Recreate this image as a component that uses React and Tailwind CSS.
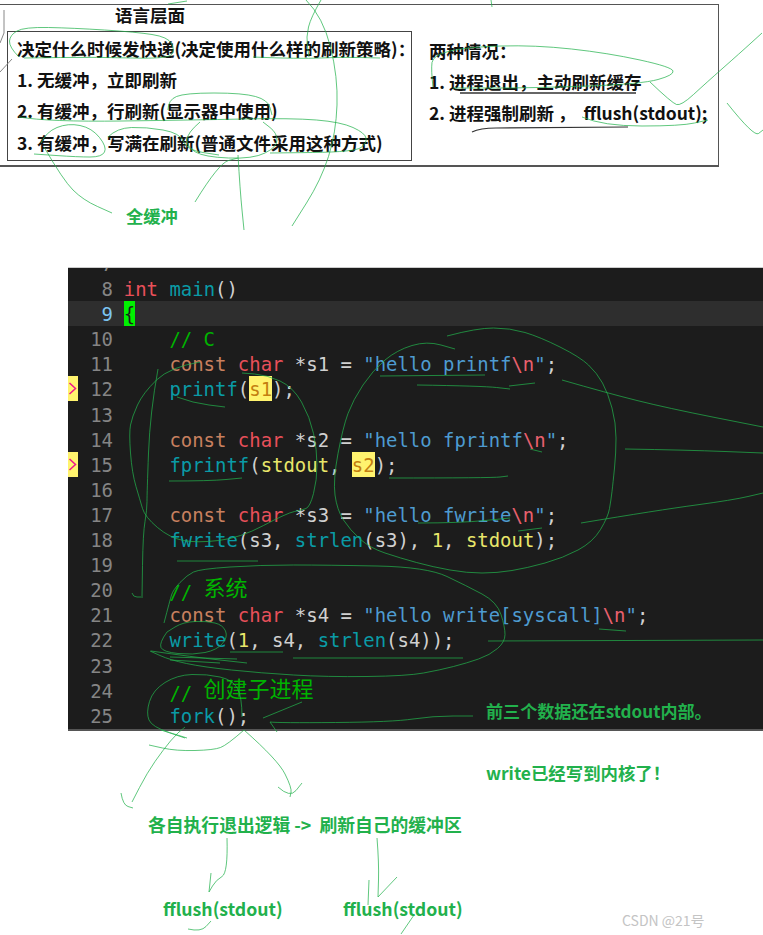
import React from 'react';

const cjk = "[font-family:'Noto_Sans_CJK_SC','Liberation_Sans',sans-serif]";

// token colours of the editor theme
const kw = 'text-[#e8505a]';
const st = 'text-[#c8805f]';
const fn = 'text-[#0a9ba6]';
const tx = 'text-[#d0d0d0]';
const cm = 'text-[#00b300]';
const str = 'text-[#4e9bd0]';
const esc = 'text-[#e8606e]';
const yl = 'text-[#e8e66a]';
const hl = 'bg-[#fff36e] text-[#c47f10] inline-block h-[25px]';

const lines = [
  { n: 7, t: [] },
  { n: 8, t: [['int', kw], [' ', tx], ['main', fn], ['()', tx]] },
  { n: 9, t: [['{', 'bg-[#00f000] text-[#1c1c1c] inline-block h-[25px]']], active: true },
  { n: 10, t: [['    // C', cm]] },
  { n: 11, t: [['    ', tx], ['const', st], [' ', tx], ['char', kw], [' *s1 = ', tx], ['"hello printf', str], ['\\n', esc], ['"', str], [';', tx]] },
  { n: 12, t: [['    ', tx], ['printf', fn], ['(', tx], ['s1', hl], [');', tx]], mark: true },
  { n: 13, t: [] },
  { n: 14, t: [['    ', tx], ['const', st], [' ', tx], ['char', kw], [' *s2 = ', tx], ['"hello fprintf', str], ['\\n', esc], ['"', str], [';', tx]] },
  { n: 15, t: [['    ', tx], ['fprintf', fn], ['(', tx], ['stdout', yl], [', ', tx], ['s2', hl], [');', tx]], mark: true },
  { n: 16, t: [] },
  { n: 17, t: [['    ', tx], ['const', st], [' ', tx], ['char', kw], [' *s3 = ', tx], ['"hello fwrite', str], ['\\n', esc], ['"', str], [';', tx]] },
  { n: 18, t: [['    ', tx], ['fwrite', fn], ['(s3, ', tx], ['strlen', fn], ['(s3), ', tx], ['1', yl], [', ', tx], ['stdout', yl], [');', tx]] },
  { n: 19, t: [] },
  { n: 20, t: [['    // ', cm]], zh: '系统' },
  { n: 21, t: [['    ', tx], ['const', st], [' ', tx], ['char', kw], [' *s4 = ', tx], ['"hello write[syscall]', str], ['\\n', esc], ['"', str], [';', tx]] },
  { n: 22, t: [['    ', tx], ['write', fn], ['(', tx], ['1', yl], [', s4, ', tx], ['strlen', fn], ['(s4));', tx]] },
  { n: 23, t: [] },
  { n: 24, t: [['    // ', cm]], zh: '创建子进程' },
  { n: 25, t: [['    ', tx], ['fork', fn], ['();', tx]] },
];

// freehand pen strokes, page coordinates
const pen = [
  '19,57 9,47 10,35 24,27 73,28 136,32 168,37 175,50 168,59 97,57 24,58',
  '253,57 300,59 340,57 380,58',
  '306,0 323,17 338,77 336,133 321,180 292,226',
  '321,0 311,17 306,37 309,57',
  '168,110 168,100 185,93 243,93 268,100 272,115',
  '19,117 49,122 195,120 292,118 341,122 365,133 367,143 355,152 270,153',
  '41,143 46,132 68,123 92,128 107,147 102,157 78,157 34,154',
  '108,137 117,128 146,127 180,133 187,150 219,155',
  '200,122 187,133 187,147 204,157 253,159 277,147 277,133 263,122',
  '44,147 63,180 83,200 112,213',
  '195,202 219,163 238,158',
  '238,155 240,190 244,230',
  '433,87 431,70 433,55 467,47 535,45 608,53 672,67 674,75 642,84 535,88 453,88',
  '582,117 603,126 681,126 708,120',
  '650,82 672,103 681,106 706,83 740,53 762,33',
  '727,103 754,137 763,130',
  '491,0 492,7',
  '168,4 187,1',
  // code panel
  '200,362 170,367 143,393 132,417 129,433 132,473 140,500 145,517 170,538 197,543 240,538 287,513 302,510 310,507 317,480 317,450 310,417 293,387 267,375 242,373',
  '158,369 150,413 147,493 147,510 143,533 142,598',
  '132,593 133,597 141,597',
  '177,397 193,403 225,407',
  '169,481 210,481 242,478',
  '177,561 258,561',
  '447,336 477,328 510,328 540,337 580,357 597,373 608,393 616,423 616,453 613,483 611,500 608,517 593,542 563,558 527,568 497,573 467,573 433,567 400,558 370,548 350,530 337,510 333,480 343,427 353,400 373,370 397,350 427,341 455,349',
  '380,376 485,375',
  '417,385 483,386 510,389',
  '509,386 535,383',
  '562,380 607,393 667,408 763,427',
  '625,449 687,450 763,453',
  '530,449 542,452',
  '389,478 492,478 508,476',
  '581,523 659,510 733,500 763,493',
  '418,523 460,523 510,518',
  '518,531 542,528',
  '164,623 170,600 173,590 187,575 200,569 260,565 327,565 427,567 467,586 497,602 505,627 505,642 490,655 467,663 440,670 407,676 327,677 260,673 203,667 170,660 150,651',
  '167,632 159,643 163,652 193,655 217,650 228,637 223,625 207,621 183,622 167,632',
  '151,651 193,657 247,663',
  '170,657 237,659',
  '170,660 220,663',
  '230,652 283,652',
  '293,658 463,658',
  '488,641 763,640',
  '599,629 626,631',
  '242,717 242,697 233,680 207,674 177,675 153,690 146,713 152,727 187,738',
  '263,718 302,702',
  '270,722 278,723 393,722 433,716 473,716',
  '270,722 277,732',
  // below panel
  '185,727 178,732 163,750 147,773 132,802',
  '121,793 123,805 133,808',
  '161,730 185,738',
  '244,730 227,745 214,750 176,751 149,745',
  '244,730 278,760 292,788 290,797',
  '278,787 290,798 302,783',
  '227,838 228,873 216,880 209,892',
  '211,873 209,892',
  '377,838 379,863 378,897',
  '369,880 368,905',
  '378,897 397,877',
  '188,929 201,932 211,921',
  '414,915 401,934',
];

function toPath(s) {
  const p = s.split(' ').map((q) => q.split(',').map(Number));
  let d = `M${p[0][0]} ${p[0][1]}`;
  for (let i = 1; i < p.length - 1; i++) {
    const mx = (p[i][0] + p[i + 1][0]) / 2;
    const my = (p[i][1] + p[i + 1][1]) / 2;
    d += ` Q${p[i][0]} ${p[i][1]} ${mx} ${my}`;
  }
  const last = p[p.length - 1];
  return `${d} L${last[0]} ${last[1]}`;
}

function CodeLine({ line }) {
  return (
    <div className={`flex h-[25.1px] leading-[27px] ${line.active ? 'bg-[#2e2e2e]' : ''}`}>
      <div className="w-[10px] shrink-0">
        {line.mark && (
          <div className="h-[25px] bg-[#fff36e]">
            <svg width="10" height="25" fill="none">
              <path d="M1.5 7 L7.5 12.5 L1.5 18" stroke="#f0128c" strokeWidth="1.5" />
            </svg>
          </div>
        )}
      </div>
      <div className={`w-[35px] shrink-0 text-right ${line.active ? 'text-[#7cc4f2]' : 'text-[#858585]'}`}>{line.n}</div>
      <div className="ml-[10.8px] whitespace-pre">
        {line.t.map((tok, i) => (
          <span key={i} className={tok[1]}>{tok[0]}</span>
        ))}
        {line.zh && <span className={`${cm} ${cjk} relative -top-[3px] text-[22px] leading-[25px]`}>{line.zh}</span>}
      </div>
    </div>
  );
}

export default function App() {
  return (
    <div className={`relative w-[763px] h-[935px] overflow-hidden bg-white pt-[4px] ${cjk}`}>
      {/* top slide */}
      <div className="w-[719px] h-[163px] border border-l-0 border-b-2 border-[#555] text-[#111] font-bold text-[17.5px]">
        <div className="h-[26px] pl-[115px] leading-[19px]">语言层面</div>
        <div className="flex">
          <div className="ml-[7px] w-[405px] h-[130px] border border-[#444] px-[9px] pt-[1px] leading-[31.2px] whitespace-pre">
            <div>决定什么时候发快递(决定使用什么样的刷新策略)：</div>
            <div>1. 无缓冲，立即刷新</div>
            <div>2. 有缓冲，行刷新(显示器中使用)</div>
            <div>3. 有缓冲，写满在刷新(普通文件采用这种方式)</div>
          </div>
          <div className="ml-[17px] pt-[4px] leading-[31px] whitespace-pre">
            <div>两种情况：</div>
            <div>1. 进程退出，主动刷新缓存</div>
            <div>2. 进程强制刷新 ，  fflush(stdout);</div>
          </div>
        </div>
      </div>

      <div className="h-[100px] pl-[126px] pt-[37px] text-[#22b14c] font-bold text-[17.3px] leading-[24px]">全缓冲</div>

      {/* editor */}
      <div className="relative ml-[68px] h-[464px] overflow-hidden border-t border-b-2 border-t-[#ccc] border-b-[#555] bg-[#1c1c1c] [font-family:'DejaVu_Sans_Mono','Liberation_Mono',monospace] text-[18.95px]">
        <div className="-mt-[17px]">
          {lines.map((line) => (
            <CodeLine key={line.n} line={line} />
          ))}
        </div>
        <div className={`absolute left-[418px] top-[431px] text-[#22b14c] font-bold text-[17.1px] leading-[24px] whitespace-pre ${cjk}`}>前三个数据还在stdout内部。</div>
      </div>

      <div className="pl-[486px] pt-[30px] text-[#22b14c] font-bold text-[17.4px] leading-[24px]">write已经写到内核了！</div>
      <div className="pl-[148px] pt-[27px] text-[#22b14c] font-bold text-[17.8px] leading-[24px] whitespace-pre">各自执行退出逻辑 -&gt;  刷新自己的缓冲区</div>
      <div className="flex pl-[163px] pt-[60px] text-[#22b14c] font-bold text-[17.7px] leading-[24px]">
        <div className="w-[180px]">fflush(stdout)</div>
        <div className="w-[279px]">fflush(stdout)</div>
        <div className="mt-[14px] text-[#c4c4c4] font-normal text-[14px] leading-[20px] whitespace-pre">CSDN @21号</div>
      </div>

      {/* pen annotations on top of everything */}
      <svg className="pointer-events-none absolute left-0 top-0" width="763" height="935" fill="none">
        <g stroke="#22b14c" strokeOpacity="0.72" strokeWidth="1">
          {pen.map((s, i) => (
            <path key={i} d={toPath(s)} />
          ))}
        </g>
        <path d="M460 93 L636 93" stroke="#666" strokeWidth="2" />
        <path d="M472 132 Q480 128 496 128 L628 127" stroke="#333" strokeWidth="1.2" />
        <path d="M4 10 L4 33 L0 43" stroke="#888" strokeWidth="1" />
        <path d="M12 59 L0 72" stroke="#888" strokeWidth="1" />
      </svg>
    </div>
  );
}
